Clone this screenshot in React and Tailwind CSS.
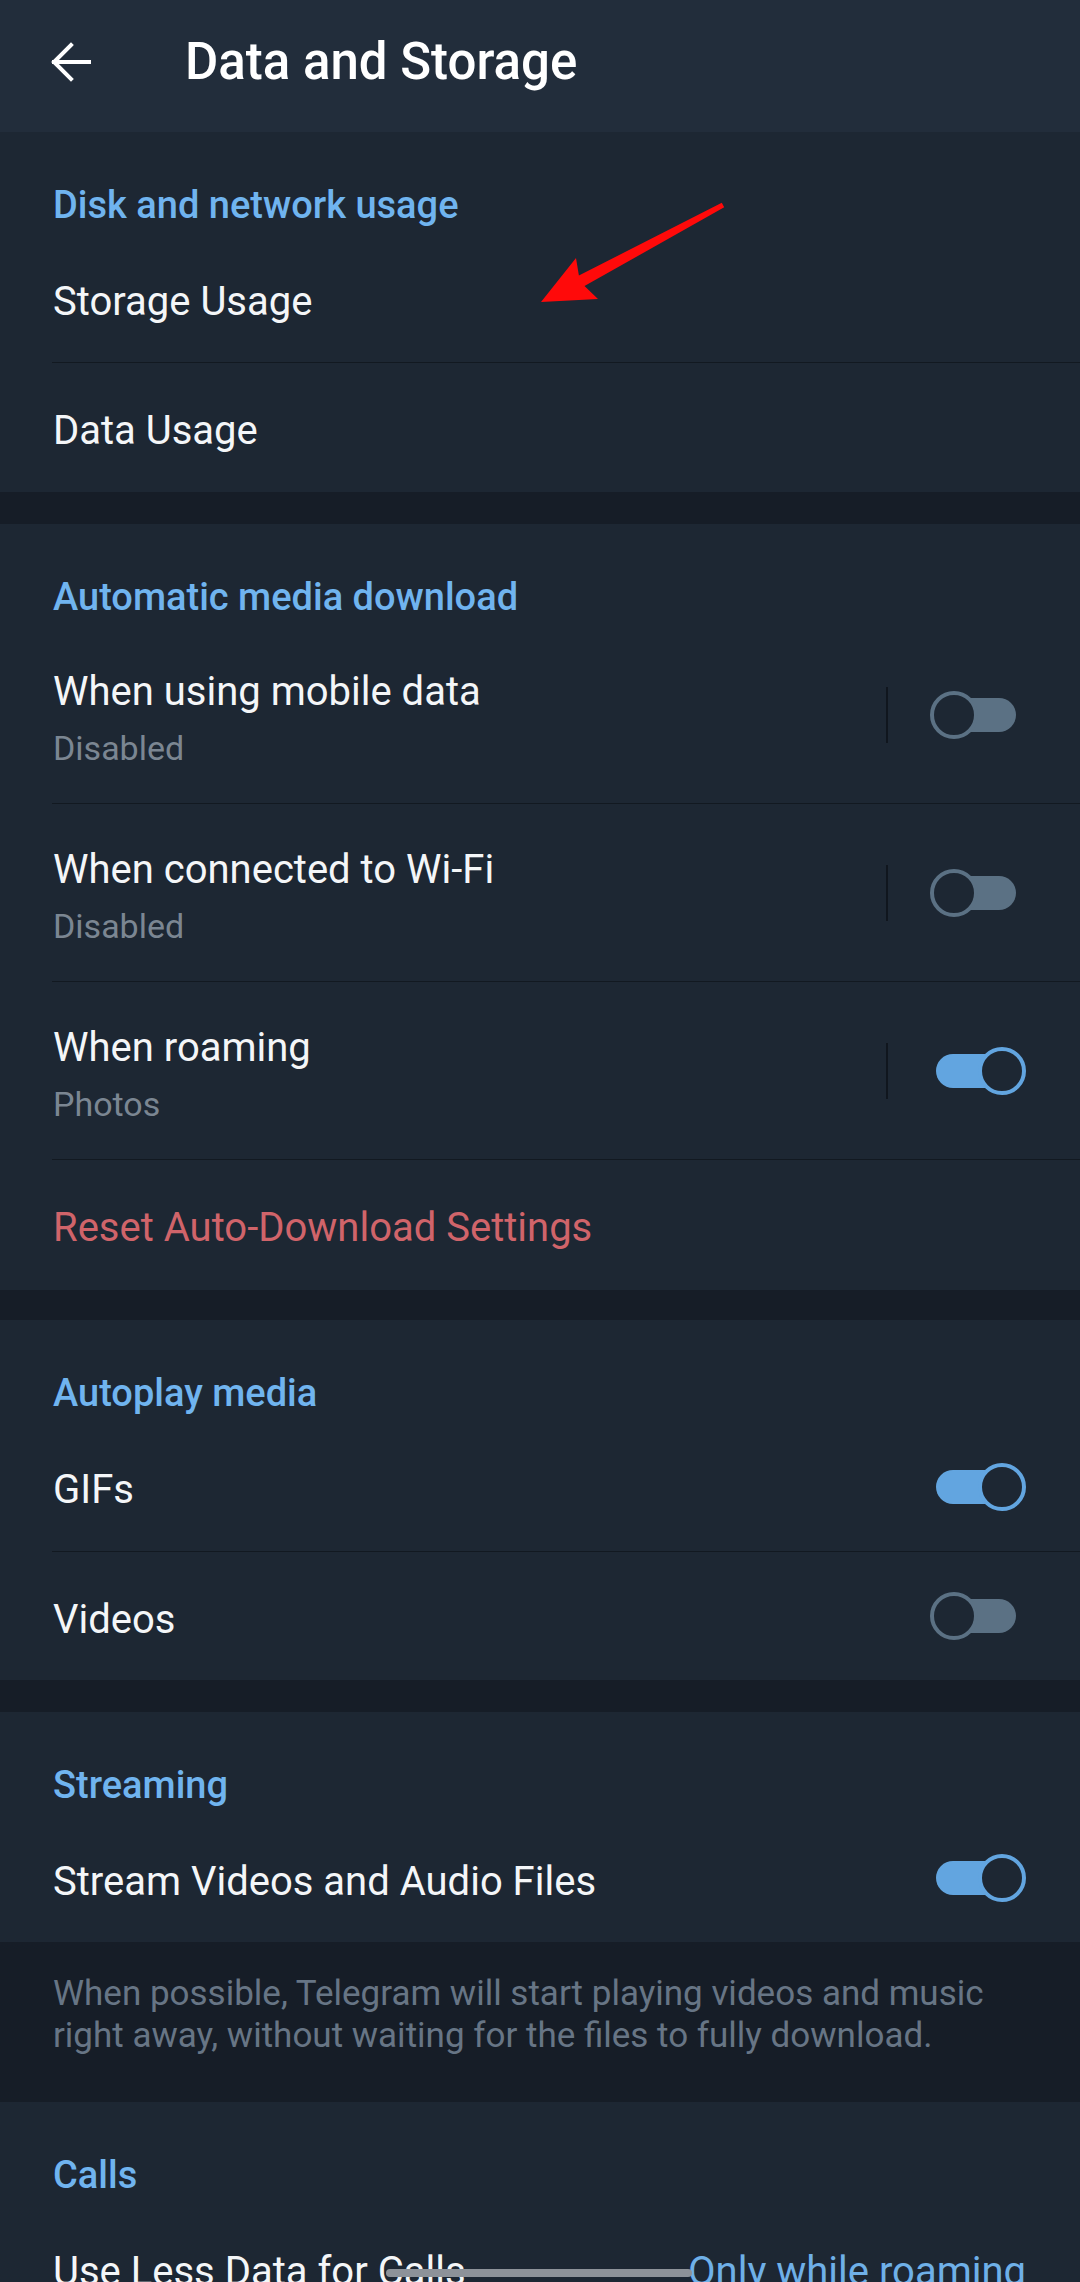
import React from "react";

function Toggle({ on }) {
  return (
    <div className="relative w-[92px] h-[50px] shrink-0">
      <div className={on ? "absolute top-[8px] left-[6px] right-[2px] h-[34px] rounded-full bg-[#62a5e0]" : "absolute top-[8px] left-[2px] right-[6px] h-[34px] rounded-full bg-[#5b7184]"} />
      <div className={on ? "absolute top-[1px] right-[-4px] w-[48px] h-[48px] rounded-full border-[4px] border-[#62a5e0] bg-[#1d2733]" : "absolute top-[1px] left-0 w-[48px] h-[48px] rounded-full border-[4px] border-[#5b7184] bg-[#1d2733]"} />
    </div>
  );
}

function Header({ children }) {
  return (
    <div className="h-[102px] pt-[50px] pl-[53px] text-[38px] leading-[46px] font-medium text-[#70b4ef]">{children}</div>
  );
}

function Divider() {
  return <div className="ml-[52px] h-px bg-[#121921]" />;
}

function Row({ title, h = "h-[129px]", right }) {
  return (
    <div className={`${h} flex items-center justify-between pl-[53px] pr-[58px]`}>
      <div className="pt-[7px] text-[40px] leading-[48px] text-[#f4f6f8]">{title}</div>
      {right}
    </div>
  );
}

function AutoRow({ title, sub, on }) {
  return (
    <div className="h-[177px] flex items-center pl-[53px] pr-[58px]">
      <div className="flex-1 self-stretch pt-[42px]">
        <div className="text-[40px] leading-[48px] text-[#f4f6f8]">{title}</div>
        <div className="mt-[12px] text-[34px] leading-[40px] text-[#7b8692]">{sub}</div>
      </div>
      <div className="w-[2px] h-[56px] bg-[#10161e]" />
      <div className="ml-[42px]">
        <Toggle on={on} />
      </div>
    </div>
  );
}

export default function App() {
  return (
    <div className="relative w-[1080px] h-[2282px] overflow-hidden bg-[#161d27] font-['Roboto',sans-serif]">
      {/* action bar */}
      <div className="h-[132px] pb-[9px] bg-[#222d3b] flex items-center">
        <svg className="ml-[49px] w-[44px] h-[44px]" viewBox="0 0 44 44" fill="none" stroke="#ffffff" strokeWidth="4" strokeLinecap="square">
          <path d="M5 22 H40" />
          <path d="M22 5 L5 22 L22 39" />
        </svg>
        <div className="ml-[92px] text-[51px] font-medium text-white leading-none">Data and Storage</div>
      </div>

      <div className="bg-[#1d2733]">
        <Header>Disk and network usage</Header>
        <Row title="Storage Usage" h="h-[128px]" />
        <Divider />
        <Row title="Data Usage" />
      </div>
      <div className="h-[32px]" />

      <div className="bg-[#1d2733]">
        <Header>Automatic media download</Header>
        <AutoRow title="When using mobile data" sub="Disabled" on={false} />
        <Divider />
        <AutoRow title="When connected to Wi-Fi" sub="Disabled" on={false} />
        <Divider />
        <AutoRow title="When roaming" sub="Photos" on={true} />
        <Divider />
        <div className="h-[130px] pt-[5px] flex items-center pl-[53px] text-[40px] leading-[48px] text-[#d0646a]">Reset Auto-Download Settings</div>
      </div>
      <div className="h-[30px]" />

      <div className="bg-[#1d2733]">
        <Header>Autoplay media</Header>
        <Row title="GIFs" right={<Toggle on={true} />} />
        <Divider />
        <Row title="Videos" h="h-[128px]" right={<Toggle on={false} />} />
      </div>
      <div className="h-[32px]" />

      <div className="bg-[#1d2733]">
        <Header>Streaming</Header>
        <Row title="Stream Videos and Audio Files" h="h-[128px]" right={<Toggle on={true} />} />
      </div>
      <div className="h-[160px] pt-[31px] pl-[53px] pr-[50px] text-[35px] leading-[42px] text-[#677585]">
        When possible, Telegram will start playing videos and music right away, without waiting for the files to fully download.
      </div>

      <div className="bg-[#1d2733] h-[400px]">
        <Header>Calls</Header>
        <div className="h-[129px] pt-[7px] flex items-center justify-between pl-[53px] pr-[54px]">
          <div className="text-[40px] leading-[48px] text-[#f4f6f8]">Use Less Data for Calls</div>
          <div className="text-[40px] leading-[48px] text-[#6fb0e8]">Only while roaming</div>
        </div>
      </div>

      {/* annotation arrow */}
      <svg className="absolute left-0 top-0 pointer-events-none" width="1080" height="400" viewBox="0 0 1080 400">
        <polygon fill="#ff0a0a" points="721.8,202.8 578.9,275.5 576,258 541,302 598,299 584.5,286.1 724.2,207.2" />
      </svg>

      {/* gesture bar */}
      <div className="absolute left-[386px] top-[2269px] w-[306px] h-[8px] rounded-full bg-[#8d9299]" />
    </div>
  );
}
